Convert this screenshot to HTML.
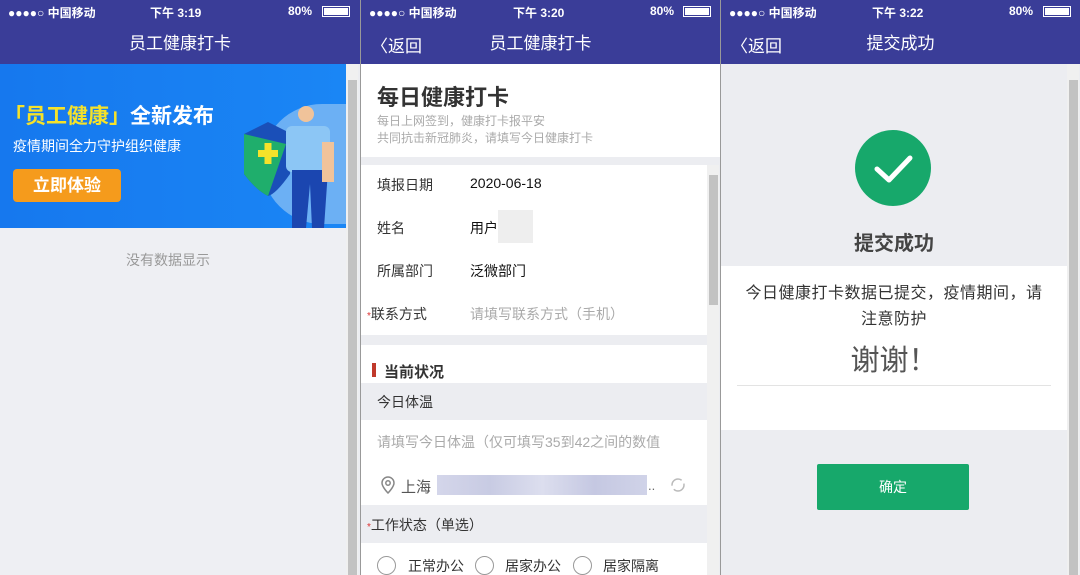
<html><head><style>
body{margin:0;width:1080px;height:575px;overflow:hidden;background:#fff;font-family:"Liberation Sans","Noto Sans CJK SC",sans-serif;position:relative}
.p{position:absolute;top:0;height:575px;overflow:hidden;background:#ecedf1}
.sb{position:absolute;top:0;left:0;right:0;height:22px;background:#3a3d98;color:#fff;font-size:12px;font-weight:bold}
.nav{position:absolute;top:22px;left:0;right:0;height:42px;background:#3a3d98;color:#fff;font-size:17px;text-align:center;line-height:44px}
.a{position:absolute;white-space:nowrap}
.scr{position:absolute;width:12px;background:#f0f0f0}
.th{position:absolute;left:2px;width:9px;background:#c2c2c2}
.w{position:absolute;background:#fff}
.lab{font-size:14px;color:#333}
.ph{font-size:14px;color:#aaa}
.rad{position:absolute;width:17px;height:17px;border:1px solid #999;border-radius:50%;top:556px}
</style></head><body>
<!-- panel 1 -->
<div class="p" style="left:0;width:360px">
<div class="sb"><span class="a" style="left:8px;top:4px">●●●●○ 中国移动</span><span class="a" style="left:150px;top:4px">下午 3:19</span><span class="a" style="left:288px;top:4px">80%</span><span class="a" style="left:322px;top:6px;width:26px;height:9px;border:1px solid #fff;background:#fff;box-shadow:inset 0 0 0 1px #3a3d98"></span></div>
<div class="nav">员工健康打卡</div>
<div class="a" style="left:0;top:64px;width:346px;height:164px;background:linear-gradient(90deg,#1678ee,#1a86f5)">
<div class="a" style="left:4px;top:36px;font-size:21px;font-weight:bold;color:#f5e22a">「员工健康」<span style="color:#fff">全新发布</span></div>
<div class="a" style="left:13px;top:72px;font-size:14px;color:#fff">疫情期间全力守护组织健康</div>
<div class="a" style="left:13px;top:105px;width:108px;height:33px;background:#f59b1c;border-radius:4px;color:#fff;font-size:17px;font-weight:bold;text-align:center;line-height:33px">立即体验</div>
<div class="a" style="left:262px;top:40px;width:84px;height:120px;border-radius:60px 0 0 60px;background:#6cb0f4"></div>
<svg class="a" style="left:236px;top:40px" width="110" height="124"><path d="M8 30 L32 18 L56 30 L54 70 Q40 90 32 92 Q20 86 8 70Z" fill="#1a4fb8"/><path d="M8 30 L8 70 Q20 86 32 92 L50 40Z" fill="#1fae6c"/><rect x="22" y="46" width="20" height="7" fill="#f5e22a"/><rect x="28.5" y="39" width="7" height="21" fill="#f5e22a"/><circle cx="70" cy="10" r="8" fill="#f0c39a"/><rect x="50" y="22" width="44" height="46" rx="6" fill="#8cc6f5"/><path d="M56 66 L92 66 L88 124 L76 124 L74 80 L70 124 L56 124Z" fill="#1b46b0"/><rect x="86" y="38" width="12" height="40" fill="#f0c39a"/></svg>
</div>
<div class="scr" style="left:346px;top:64px;height:511px"><div class="th" style="top:16px;height:495px"></div></div>
<div class="a" style="left:0;top:228px;width:346px;height:347px;background:#eeeff3"></div>
<div class="a" style="left:126px;top:250px;font-size:14px;color:#999">没有数据显示</div>
</div>
<!-- panel 2 -->
<div class="p" style="left:361px;width:359px">
<div class="sb"><span class="a" style="left:8px;top:4px">●●●●○ 中国移动</span><span class="a" style="left:152px;top:4px">下午 3:20</span><span class="a" style="left:289px;top:4px">80%</span><span class="a" style="left:322px;top:6px;width:26px;height:9px;border:1px solid #fff;background:#fff;box-shadow:inset 0 0 0 1px #3a3d98"></span></div>
<div class="nav">员工健康打卡</div>
<div class="a" style="left:10px;top:32px;color:#fff;font-size:17px">〈返回</div>
<div class="w" style="left:0;top:64px;width:359px;height:93px"></div>
<div class="a" style="left:16px;top:80px;font-size:22px;font-weight:bold;color:#333">每日健康打卡</div>
<div class="a" style="left:16px;top:113px;font-size:12px;color:#aaa;line-height:17px">每日上网签到，健康打卡报平安<br>共同抗击新冠肺炎，请填写今日健康打卡</div>
<div class="w" style="left:0;top:165px;width:346px;height:170px"></div>
<div class="a lab" style="left:16px;top:175px">填报日期</div><div class="a lab" style="left:109px;top:175px;color:#111">2020-06-18</div>
<div class="a lab" style="left:16px;top:218px">姓名</div><div class="a lab" style="left:109px;top:218px;color:#111">用户</div><div class="a" style="left:137px;top:210px;width:35px;height:33px;background:#eee"></div>
<div class="a lab" style="left:16px;top:261px">所属部门</div><div class="a lab" style="left:109px;top:261px;color:#111">泛微部门</div>
<div class="a lab" style="left:6px;top:304px"><span style="color:#d33;font-size:10px">*</span>联系方式</div><div class="a ph" style="left:109px;top:304px">请填写联系方式（手机）</div>
<div class="w" style="left:0;top:345px;width:346px;height:38px"></div>
<div class="a" style="left:11px;top:363px;width:4px;height:14px;background:#c0392b"></div>
<div class="a" style="left:23px;top:361px;font-size:15px;font-weight:bold;color:#333">当前状况</div>
<div class="a lab" style="left:16px;top:392px">今日体温</div>
<div class="w" style="left:0;top:420px;width:346px;height:85px"></div>
<div class="a ph" style="left:16px;top:432px">请填写今日体温（仅可填写35到42之间的数值</div>
<svg class="a" style="left:20px;top:476px" width="14" height="18"><path d="M7 1 A6 6 0 0 1 13 7 C13 11 7 17 7 17 C7 17 1 11 1 7 A6 6 0 0 1 7 1Z" fill="none" stroke="#888" stroke-width="1.5"/><circle cx="7" cy="7" r="2.2" fill="none" stroke="#888" stroke-width="1.5"/></svg>
<div class="a" style="left:40px;top:476px;font-size:15px;color:#555">上海</div>
<div class="a" style="left:76px;top:475px;width:210px;height:20px;background:linear-gradient(90deg,#d4d6ea,#c8cbe3,#dcdeee,#c5c8e2,#d0d3e8)"></div>
<div class="a" style="left:287px;top:478px;font-size:13px;color:#666">..</div>
<svg class="a" style="left:309px;top:477px" width="16" height="16"><circle cx="8" cy="8" r="6" fill="none" stroke="#bbb" stroke-width="1.5" stroke-dasharray="14 4"/></svg>
<div class="a lab" style="left:6px;top:515px"><span style="color:#d33;font-size:10px">*</span>工作状态（单选）</div>
<div class="w" style="left:0;top:543px;width:346px;height:32px"></div>
<span class="rad" style="left:16px"></span><div class="a lab" style="left:47px;top:556px">正常办公</div>
<span class="rad" style="left:114px"></span><div class="a lab" style="left:144px;top:556px">居家办公</div>
<span class="rad" style="left:212px"></span><div class="a lab" style="left:242px;top:556px">居家隔离</div>
<div class="scr" style="left:346px;top:165px;height:410px"><div class="th" style="top:10px;height:130px"></div></div>
</div>
<!-- panel 3 -->
<div class="p" style="left:721px;width:359px">
<div class="sb"><span class="a" style="left:8px;top:4px">●●●●○ 中国移动</span><span class="a" style="left:151px;top:4px">下午 3:22</span><span class="a" style="left:288px;top:4px">80%</span><span class="a" style="left:322px;top:6px;width:26px;height:9px;border:1px solid #fff;background:#fff;box-shadow:inset 0 0 0 1px #3a3d98"></span></div>
<div class="nav">提交成功</div>
<div class="a" style="left:10px;top:32px;color:#fff;font-size:17px">〈返回</div>
<svg class="a" style="left:134px;top:130px" width="76" height="76"><circle cx="38" cy="38" r="38" fill="#17a86b"/><path d="M22 39 L34 50 L55 28" fill="none" stroke="#fff" stroke-width="5" stroke-linecap="round" stroke-linejoin="round"/></svg>
<div class="a" style="left:0;width:346px;top:227px;text-align:center;font-size:20px;font-weight:bold;color:#444">提交成功</div>
<div class="w" style="left:0;top:266px;width:346px;height:164px"></div>
<div class="a" style="left:0;width:346px;top:281px;text-align:center;font-size:16px;letter-spacing:0.5px;line-height:26px;color:#333">今日健康打卡数据已提交，疫情期间，请<br>注意防护</div>
<div class="a" style="left:0;width:346px;top:337px;text-align:center;font-size:29px;color:#555">谢谢！</div>
<div class="a" style="left:16px;top:385px;width:314px;height:1px;background:#e3e3e3"></div>
<div class="a" style="left:96px;top:464px;width:152px;height:46px;background:#17a86b;border-radius:2px;color:#fff;font-size:14px;text-align:center;line-height:46px">确定</div>
<div class="scr" style="left:346px;top:64px;height:511px"><div class="th" style="top:16px;height:495px"></div></div>
</div>
<div class="a" style="left:360px;top:0;width:1px;height:575px;background:#999"></div>
<div class="a" style="left:720px;top:0;width:1px;height:575px;background:#999"></div>
</body></html>
